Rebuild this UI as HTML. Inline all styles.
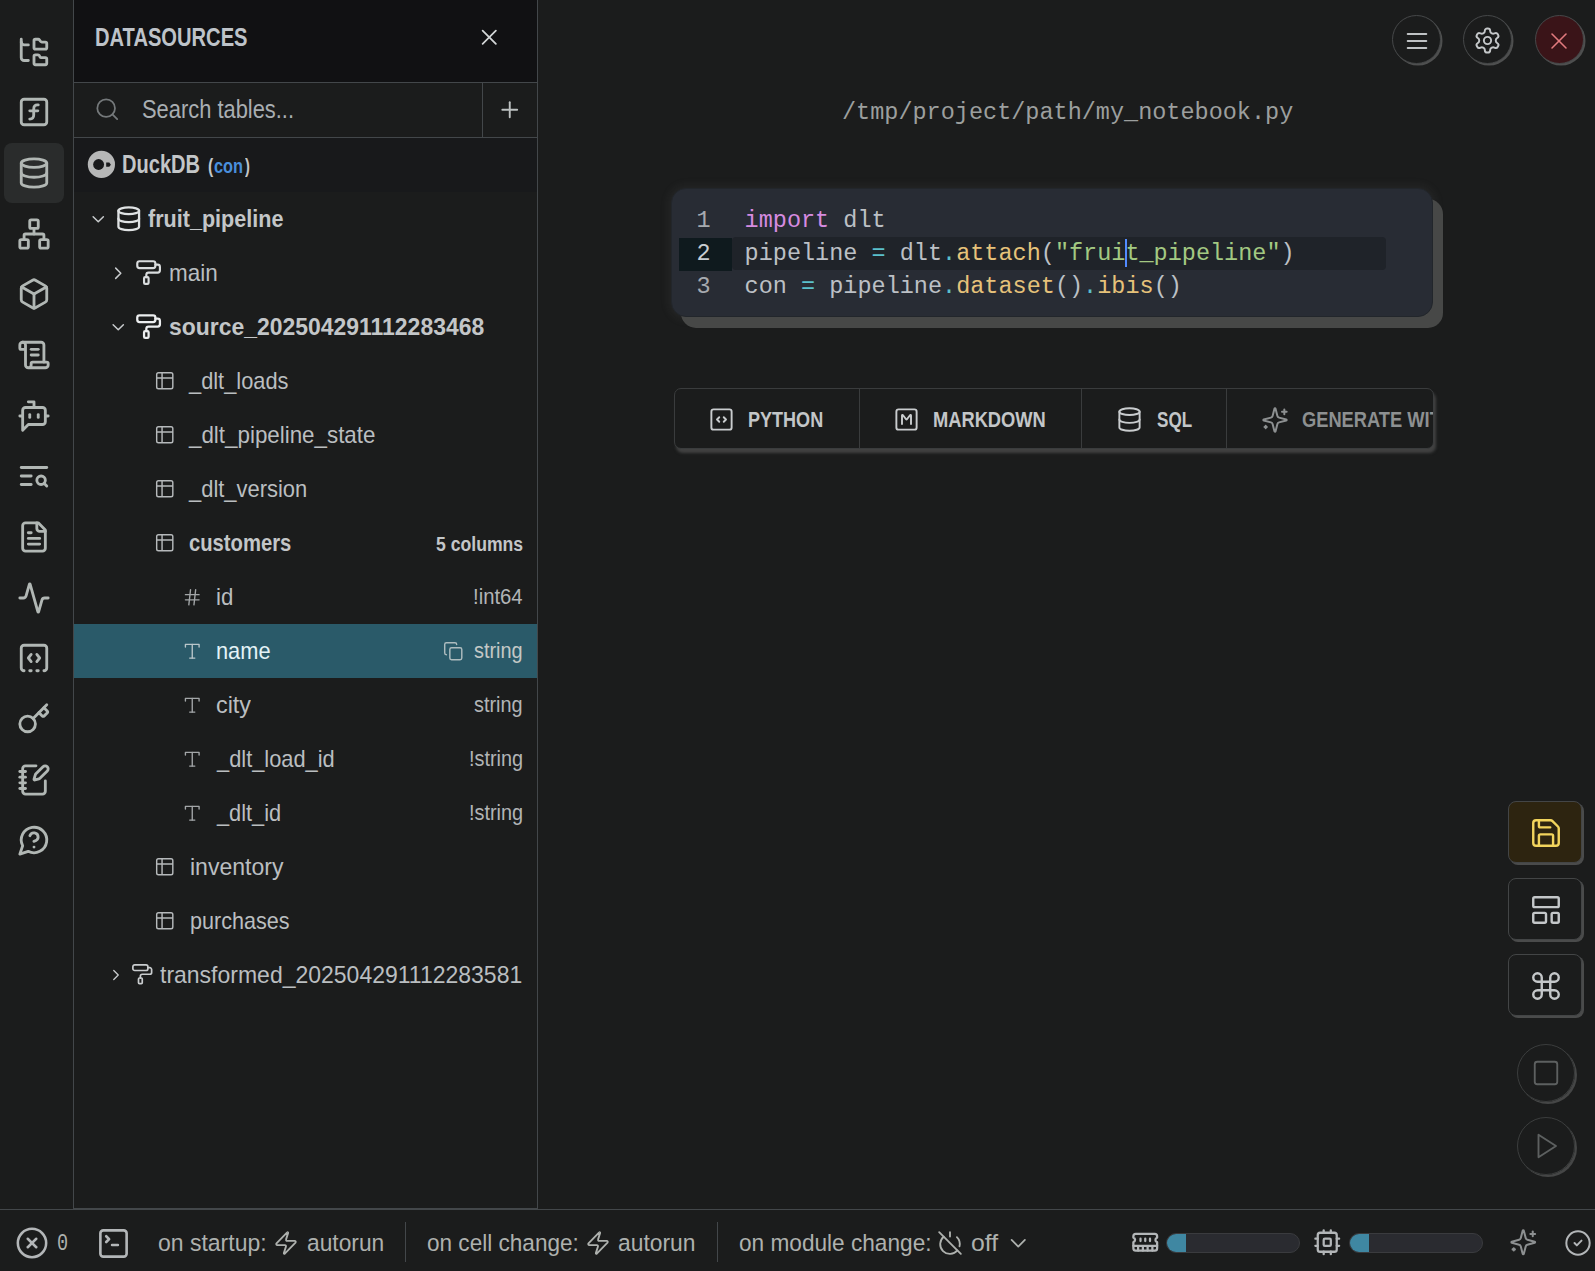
<!DOCTYPE html>
<html><head><meta charset="utf-8"><title>marimo</title>
<style>
html,body{margin:0;padding:0;width:1595px;height:1271px;overflow:hidden;background:#1b1c1c;font-family:"Liberation Sans", sans-serif}
.t{position:absolute;white-space:pre}
.r{position:absolute;box-sizing:border-box}
.ic{position:absolute;overflow:visible}
</style></head><body>
<div class="r" style="left:73px;top:0px;width:1px;height:1209px;background:#43474a"></div>
<div class="r" style="left:4px;top:143px;width:60px;height:60px;background:#2a2c2c;border-radius:8px"></div>
<svg class="ic" style="left:16.9px;top:34.6px;width:34px;height:34px;color:#b1b7b4" viewBox="0 0 24 24" fill="none" stroke="currentColor" stroke-width="2.0" stroke-linecap="round" stroke-linejoin="round"><path d="M20 10a1 1 0 0 0 1-1V6a1 1 0 0 0-1-1h-2.5a1 1 0 0 1-.8-.4l-.9-1.2A1 1 0 0 0 15 3h-2a1 1 0 0 0-1 1v5a1 1 0 0 0 1 1Z"/><path d="M20 21a1 1 0 0 0 1-1v-3a1 1 0 0 0-1-1h-2.9a1 1 0 0 1-.88-.55l-.42-.85a1 1 0 0 0-.92-.6H13a1 1 0 0 0-1 1v5a1 1 0 0 0 1 1Z"/><path d="M3 5a2 2 0 0 0 2 2h3"/><path d="M3 3v13a2 2 0 0 0 2 2h3"/></svg>
<svg class="ic" style="left:16.9px;top:95.25999999999999px;width:34px;height:34px;color:#b1b7b4" viewBox="0 0 24 24" fill="none" stroke="currentColor" stroke-width="2.0" stroke-linecap="round" stroke-linejoin="round"><rect width="18" height="18" x="3" y="3" rx="2" ry="2"/><path d="M9 17c2 0 2.8-1 2.8-2.8V10c0-2 1-3.3 3.2-3"/><path d="M9 11.2h5.7"/></svg>
<svg class="ic" style="left:16.9px;top:155.92px;width:34px;height:34px;color:#b1b7b4" viewBox="0 0 24 24" fill="none" stroke="currentColor" stroke-width="2.0" stroke-linecap="round" stroke-linejoin="round"><ellipse cx="12" cy="5" rx="9" ry="3"/><path d="M3 5V19A9 3 0 0 0 21 19V5"/><path d="M3 12A9 3 0 0 0 21 12"/></svg>
<svg class="ic" style="left:16.9px;top:216.57999999999998px;width:34px;height:34px;color:#b1b7b4" viewBox="0 0 24 24" fill="none" stroke="currentColor" stroke-width="2.0" stroke-linecap="round" stroke-linejoin="round"><rect x="16" y="16" width="6" height="6" rx="1"/><rect x="2" y="16" width="6" height="6" rx="1"/><rect x="9" y="2" width="6" height="6" rx="1"/><path d="M5 16v-3a1 1 0 0 1 1-1h12a1 1 0 0 1 1 1v3"/><path d="M12 12V8"/></svg>
<svg class="ic" style="left:16.9px;top:277.24px;width:34px;height:34px;color:#b1b7b4" viewBox="0 0 24 24" fill="none" stroke="currentColor" stroke-width="2.0" stroke-linecap="round" stroke-linejoin="round"><path d="M21 8a2 2 0 0 0-1-1.73l-7-4a2 2 0 0 0-2 0l-7 4A2 2 0 0 0 3 8v8a2 2 0 0 0 1 1.73l7 4a2 2 0 0 0 2 0l7-4A2 2 0 0 0 21 16Z"/><path d="m3.3 7 8.7 5 8.7-5"/><path d="M12 22V12"/></svg>
<svg class="ic" style="left:16.9px;top:337.9px;width:34px;height:34px;color:#b1b7b4" viewBox="0 0 24 24" fill="none" stroke="currentColor" stroke-width="2.0" stroke-linecap="round" stroke-linejoin="round"><path d="M15 12h-5"/><path d="M15 8h-5"/><path d="M19 17V5a2 2 0 0 0-2-2H4"/><path d="M8 21h12a2 2 0 0 0 2-2v-1a1 1 0 0 0-1-1H11a1 1 0 0 0-1 1v1a2 2 0 1 1-4 0V5a2 2 0 1 0-4 0v2a1 1 0 0 0 1 1h3"/></svg>
<svg class="ic" style="left:16.9px;top:398.56px;width:34px;height:34px;color:#b1b7b4" viewBox="0 0 24 24" fill="none" stroke="currentColor" stroke-width="2.0" stroke-linecap="round" stroke-linejoin="round"><path d="M12 6V2H8"/><path d="m8 18-4 4V8a2 2 0 0 1 2-2h12a2 2 0 0 1 2 2v8a2 2 0 0 1-2 2Z"/><path d="M2 12h2"/><path d="M9 11v2"/><path d="M15 11v2"/><path d="M20 12h2"/></svg>
<svg class="ic" style="left:16.9px;top:459.22px;width:34px;height:34px;color:#b1b7b4" viewBox="0 0 24 24" fill="none" stroke="currentColor" stroke-width="2.0" stroke-linecap="round" stroke-linejoin="round"><path d="M21 6H3"/><path d="M10 12H3"/><path d="M10 18H3"/><circle cx="17" cy="15" r="3"/><path d="m21 19-1.9-1.9"/></svg>
<svg class="ic" style="left:16.9px;top:519.88px;width:34px;height:34px;color:#b1b7b4" viewBox="0 0 24 24" fill="none" stroke="currentColor" stroke-width="2.0" stroke-linecap="round" stroke-linejoin="round"><path d="M15 2H6a2 2 0 0 0-2 2v16a2 2 0 0 0 2 2h12a2 2 0 0 0 2-2V7Z"/><path d="M14 2v4a2 2 0 0 0 2 2h4"/><path d="M10 9H8"/><path d="M16 13H8"/><path d="M16 17H8"/></svg>
<svg class="ic" style="left:16.9px;top:580.54px;width:34px;height:34px;color:#b1b7b4" viewBox="0 0 24 24" fill="none" stroke="currentColor" stroke-width="2.0" stroke-linecap="round" stroke-linejoin="round"><path d="M22 12h-2.48a2 2 0 0 0-1.93 1.46l-2.35 8.36a.25.25 0 0 1-.48 0L9.24 2.18a.25.25 0 0 0-.48 0l-2.35 8.36A2 2 0 0 1 4.49 12H2"/></svg>
<svg class="ic" style="left:16.9px;top:641.1999999999999px;width:34px;height:34px;color:#b1b7b4" viewBox="0 0 24 24" fill="none" stroke="currentColor" stroke-width="2.0" stroke-linecap="round" stroke-linejoin="round"><path d="M10 9.5 8 12l2 2.5"/><path d="M14 21h1"/><path d="m14 9.5 2 2.5-2 2.5"/><path d="M5 21a2 2 0 0 1-2-2V5a2 2 0 0 1 2-2h14a2 2 0 0 1 2 2v14a2 2 0 0 1-2 2"/><path d="M9 21h1"/></svg>
<svg class="ic" style="left:16.9px;top:701.86px;width:34px;height:34px;color:#b1b7b4" viewBox="0 0 24 24" fill="none" stroke="currentColor" stroke-width="2.0" stroke-linecap="round" stroke-linejoin="round"><path d="m15.5 7.5 2.3 2.3a1 1 0 0 0 1.4 0l2.1-2.1a1 1 0 0 0 0-1.4L19 4"/><path d="m21 2-9.6 9.6"/><circle cx="7.5" cy="15.5" r="5.5"/></svg>
<svg class="ic" style="left:16.9px;top:762.52px;width:34px;height:34px;color:#b1b7b4" viewBox="0 0 24 24" fill="none" stroke="currentColor" stroke-width="2.0" stroke-linecap="round" stroke-linejoin="round"><path d="M13.4 2H6a2 2 0 0 0-2 2v16a2 2 0 0 0 2 2h12a2 2 0 0 0 2-2v-7.4"/><path d="M2 6h4"/><path d="M2 10h4"/><path d="M2 14h4"/><path d="M2 18h4"/><path d="M21.378 5.626a1 1 0 1 0-3.004-3.004l-5.01 5.012a2 2 0 0 0-.506.854l-.837 2.87a.5.5 0 0 0 .62.62l2.87-.837a2 2 0 0 0 .854-.506z"/></svg>
<svg class="ic" style="left:16.9px;top:823.18px;width:34px;height:34px;color:#b1b7b4" viewBox="0 0 24 24" fill="none" stroke="currentColor" stroke-width="2.0" stroke-linecap="round" stroke-linejoin="round"><path d="M7.9 20A9 9 0 1 0 4 16.1L2 22Z"/><path d="M9.09 9a3 3 0 0 1 5.83 1c0 2-3 3-3 3"/><path d="M12 17h.01"/></svg>
<div class="r" style="left:74px;top:0px;width:463px;height:82px;background:#111113"></div>
<div class="r" style="left:74px;top:82px;width:463px;height:1px;background:#43474a"></div>
<div class="r" style="left:537px;top:0px;width:1px;height:1209px;background:#43474a"></div>
<div class="r" style="left:74px;top:1208px;width:463px;height:1px;background:#43474a"></div>
<div class="t" style="left:95.00px;top:23.58px;font-size:25px;line-height:27.925px;color:#bec3c9;font-weight:700;font-family:'Liberation Sans', sans-serif;transform:scaleX(0.8054);transform-origin:0 0">DATASOURCES</div>
<svg class="ic" style="left:476.15px;top:24.25px;width:26.5px;height:26.5px;color:#d3d6d7" viewBox="0 0 24 24" fill="none" stroke="currentColor" stroke-width="1.6" stroke-linecap="round" stroke-linejoin="round"><path d="M18 6 6 18"/><path d="m6 6 12 12"/></svg>
<svg class="ic" style="left:94.15px;top:96.05px;width:26.5px;height:26.5px;color:#75797b" viewBox="0 0 24 24" fill="none" stroke="currentColor" stroke-width="1.6" stroke-linecap="round" stroke-linejoin="round"><circle cx="11" cy="11" r="8"/><path d="m21 21-4.3-4.3"/></svg>
<div class="t" style="left:142.10px;top:95.67px;font-size:25px;line-height:27.925px;color:#a9aeb2;font-weight:400;font-family:'Liberation Sans', sans-serif;transform:scaleX(0.8751);transform-origin:0 0">Search tables...</div>
<div class="r" style="left:482px;top:83px;width:1px;height:54px;background:#43474a"></div>
<svg class="ic" style="left:496.75px;top:96.55px;width:25.5px;height:25.5px;color:#bcc0c0" viewBox="0 0 24 24" fill="none" stroke="currentColor" stroke-width="1.8" stroke-linecap="round" stroke-linejoin="round"><path d="M5 12h14"/><path d="M12 5v14"/></svg>
<div class="r" style="left:74px;top:137px;width:463px;height:1px;background:#43474a"></div>
<div class="r" style="left:74px;top:138px;width:463px;height:54px;background:#18191b"></div>
<svg class="ic" style="left:82px;top:145px;width:40px;height:40px" viewBox="0 0 40 40"><circle cx="19.4" cy="19.4" r="13.6" fill="#b6b7b7"/><circle cx="16.6" cy="19.5" r="5.45" fill="#18191b"/><polygon points="24.2,17.6 27.3,17.6 28.9,19.65 27.3,21.7 24.2,21.7" fill="#18191b"/></svg>
<div class="t" style="left:121.80px;top:150.22px;font-size:25.5px;line-height:28.483px;color:#c3c6c8;font-weight:700;font-family:'Liberation Sans', sans-serif;transform:scaleX(0.7863);transform-origin:0 0">DuckDB</div>
<div class="t" style="left:207.80px;top:154.30px;font-size:21px;line-height:23.457px;color:#c3c6c8;font-weight:700;font-family:'Liberation Sans', sans-serif;transform:scaleX(0.7436);transform-origin:0 0">(</div>
<div class="t" style="left:213.80px;top:153.59px;font-size:21px;line-height:23.457px;color:#4a8fdd;font-weight:700;font-family:'Liberation Sans', sans-serif;transform:scaleX(0.7794);transform-origin:0 0">con</div>
<div class="t" style="left:244.50px;top:154.30px;font-size:21px;line-height:23.457px;color:#c3c6c8;font-weight:700;font-family:'Liberation Sans', sans-serif;transform:scaleX(0.7007);transform-origin:0 0">)</div>
<svg class="ic" style="left:87.85px;top:208.75px;width:20.5px;height:20.5px;color:#c9ccce" viewBox="0 0 24 24" fill="none" stroke="currentColor" stroke-width="1.75" stroke-linecap="round" stroke-linejoin="round"><path d="m6 9 6 6 6-6"/></svg>
<svg class="ic" style="left:114.85px;top:204.85px;width:27.5px;height:27.5px;color:#dfe2e3" viewBox="0 0 24 24" fill="none" stroke="currentColor" stroke-width="2.0" stroke-linecap="round" stroke-linejoin="round"><ellipse cx="12" cy="5" rx="9" ry="3"/><path d="M3 5V19A9 3 0 0 0 21 19V5"/><path d="M3 12A9 3 0 0 0 21 12"/></svg>
<div class="t" style="left:148.20px;top:205.68px;font-size:24px;line-height:26.808px;color:#c3c6c8;font-weight:700;font-family:'Liberation Sans', sans-serif;transform:scaleX(0.8986);transform-origin:0 0">fruit_pipeline</div>
<svg class="ic" style="left:107.95px;top:262.95px;width:20.5px;height:20.5px;color:#c9ccce" viewBox="0 0 24 24" fill="none" stroke="currentColor" stroke-width="1.75" stroke-linecap="round" stroke-linejoin="round"><path d="m9 18 6-6-6-6"/></svg>
<svg class="ic" style="left:134.9px;top:258.9px;width:27.2px;height:27.2px;color:#d9dcdd" viewBox="0 0 24 24" fill="none" stroke="currentColor" stroke-width="1.9" stroke-linecap="round" stroke-linejoin="round"><rect width="16" height="6" x="2" y="2" rx="2"/><path d="M10 16v-2a2 2 0 0 1 2-2h8a2 2 0 0 0 2-2V7a2 2 0 0 0-2-2h-2"/><rect width="4" height="6" x="8" y="16" rx="1"/></svg>
<div class="t" style="left:169.40px;top:260.28px;font-size:24px;line-height:26.808px;color:#babec0;font-weight:400;font-family:'Liberation Sans', sans-serif;transform:scaleX(0.9360);transform-origin:0 0">main</div>
<svg class="ic" style="left:107.75px;top:316.75px;width:20.5px;height:20.5px;color:#c9ccce" viewBox="0 0 24 24" fill="none" stroke="currentColor" stroke-width="1.75" stroke-linecap="round" stroke-linejoin="round"><path d="m6 9 6 6 6-6"/></svg>
<svg class="ic" style="left:134.9px;top:312.9px;width:27.2px;height:27.2px;color:#eceeef" viewBox="0 0 24 24" fill="none" stroke="currentColor" stroke-width="2.0" stroke-linecap="round" stroke-linejoin="round"><rect width="16" height="6" x="2" y="2" rx="2"/><path d="M10 16v-2a2 2 0 0 1 2-2h8a2 2 0 0 0 2-2V7a2 2 0 0 0-2-2h-2"/><rect width="4" height="6" x="8" y="16" rx="1"/></svg>
<div class="t" style="left:169.00px;top:313.58px;font-size:24px;line-height:26.808px;color:#c3c6c8;font-weight:700;font-family:'Liberation Sans', sans-serif;transform:scaleX(0.9561);transform-origin:0 0">source_202504291112283468</div>
<svg class="ic" style="left:154.45px;top:369.75px;width:21.5px;height:21.5px;color:#b6b9bb" viewBox="0 0 24 24" fill="none" stroke="currentColor" stroke-width="1.6" stroke-linecap="round" stroke-linejoin="round"><path d="M9 3H5a2 2 0 0 0-2 2v4m6-6h10a2 2 0 0 1 2 2v4M9 3v18m0 0h10a2 2 0 0 0 2-2V9M9 21H5a2 2 0 0 1-2-2V9m0 0h18"/></svg>
<div class="t" style="left:189.25px;top:367.68px;font-size:24px;line-height:26.808px;color:#babec0;font-weight:400;font-family:'Liberation Sans', sans-serif;transform:scaleX(0.9089);transform-origin:0 0">_dlt_loads</div>
<svg class="ic" style="left:154.45px;top:423.75px;width:21.5px;height:21.5px;color:#b6b9bb" viewBox="0 0 24 24" fill="none" stroke="currentColor" stroke-width="1.6" stroke-linecap="round" stroke-linejoin="round"><path d="M9 3H5a2 2 0 0 0-2 2v4m6-6h10a2 2 0 0 1 2 2v4M9 3v18m0 0h10a2 2 0 0 0 2-2V9M9 21H5a2 2 0 0 1-2-2V9m0 0h18"/></svg>
<div class="t" style="left:189.26px;top:421.68px;font-size:24px;line-height:26.808px;color:#babec0;font-weight:400;font-family:'Liberation Sans', sans-serif;transform:scaleX(0.9315);transform-origin:0 0">_dlt_pipeline_state</div>
<svg class="ic" style="left:154.45px;top:477.75px;width:21.5px;height:21.5px;color:#b6b9bb" viewBox="0 0 24 24" fill="none" stroke="currentColor" stroke-width="1.6" stroke-linecap="round" stroke-linejoin="round"><path d="M9 3H5a2 2 0 0 0-2 2v4m6-6h10a2 2 0 0 1 2 2v4M9 3v18m0 0h10a2 2 0 0 0 2-2V9M9 21H5a2 2 0 0 1-2-2V9m0 0h18"/></svg>
<div class="t" style="left:189.25px;top:475.68px;font-size:24px;line-height:26.808px;color:#babec0;font-weight:400;font-family:'Liberation Sans', sans-serif;transform:scaleX(0.9138);transform-origin:0 0">_dlt_version</div>
<svg class="ic" style="left:154.45px;top:531.75px;width:21.5px;height:21.5px;color:#b6b9bb" viewBox="0 0 24 24" fill="none" stroke="currentColor" stroke-width="1.6" stroke-linecap="round" stroke-linejoin="round"><path d="M9 3H5a2 2 0 0 0-2 2v4m6-6h10a2 2 0 0 1 2 2v4M9 3v18m0 0h10a2 2 0 0 0 2-2V9M9 21H5a2 2 0 0 1-2-2V9m0 0h18"/></svg>
<div class="t" style="left:188.90px;top:529.68px;font-size:24px;line-height:26.808px;color:#c3c6c8;font-weight:700;font-family:'Liberation Sans', sans-serif;transform:scaleX(0.8427);transform-origin:0 0">customers</div>
<div class="t" style="left:435.90px;top:532.90px;font-size:20px;line-height:22.340px;color:#c3c6c8;font-weight:700;font-family:'Liberation Sans', sans-serif;transform:scaleX(0.8805);transform-origin:0 0">5 columns</div>
<svg class="ic" style="left:181.95px;top:587.05px;width:20.5px;height:20.5px;color:#a3a6a8" viewBox="0 0 24 24" fill="none" stroke="currentColor" stroke-width="1.6" stroke-linecap="round" stroke-linejoin="round"><line x1="4" x2="20" y1="9" y2="9"/><line x1="4" x2="20" y1="15" y2="15"/><line x1="10" x2="8" y1="3" y2="21"/><line x1="16" x2="14" y1="3" y2="21"/></svg>
<div class="t" style="left:216.30px;top:583.58px;font-size:24px;line-height:26.808px;color:#babec0;font-weight:400;font-family:'Liberation Sans', sans-serif;transform:scaleX(0.9265);transform-origin:0 0">id</div>
<div class="t" style="left:473.20px;top:585.34px;font-size:21.5px;line-height:24.015px;color:#b1b4b6;font-weight:400;font-family:'Liberation Sans', sans-serif;transform:scaleX(0.9432);transform-origin:0 0">!int64</div>
<div class="r" style="left:74px;top:624px;width:463px;height:54px;background:#2a5a69"></div>
<svg class="ic" style="left:181.95px;top:641.05px;width:20.5px;height:20.5px;color:#b9c6ca" viewBox="0 0 24 24" fill="none" stroke="currentColor" stroke-width="1.6" stroke-linecap="round" stroke-linejoin="round"><polyline points="4 7 4 4 20 4 20 7"/><line x1="9" x2="15" y1="20" y2="20"/><line x1="12" x2="12" y1="4" y2="20"/></svg>
<div class="t" style="left:216.30px;top:637.58px;font-size:24px;line-height:26.808px;color:#e3f3f7;font-weight:400;font-family:'Liberation Sans', sans-serif;transform:scaleX(0.9080);transform-origin:0 0">name</div>
<div class="t" style="left:474.20px;top:639.34px;font-size:21.5px;line-height:24.015px;color:#c3c8c6;font-weight:400;font-family:'Liberation Sans', sans-serif;transform:scaleX(0.9245);transform-origin:0 0">string</div>
<svg class="ic" style="left:181.95px;top:695.05px;width:20.5px;height:20.5px;color:#a3a6a8" viewBox="0 0 24 24" fill="none" stroke="currentColor" stroke-width="1.6" stroke-linecap="round" stroke-linejoin="round"><polyline points="4 7 4 4 20 4 20 7"/><line x1="9" x2="15" y1="20" y2="20"/><line x1="12" x2="12" y1="4" y2="20"/></svg>
<div class="t" style="left:216.30px;top:691.58px;font-size:24px;line-height:26.808px;color:#babec0;font-weight:400;font-family:'Liberation Sans', sans-serif;transform:scaleX(0.9722);transform-origin:0 0">city</div>
<div class="t" style="left:474.20px;top:693.34px;font-size:21.5px;line-height:24.015px;color:#b1b4b6;font-weight:400;font-family:'Liberation Sans', sans-serif;transform:scaleX(0.9245);transform-origin:0 0">string</div>
<svg class="ic" style="left:181.95px;top:749.05px;width:20.5px;height:20.5px;color:#a3a6a8" viewBox="0 0 24 24" fill="none" stroke="currentColor" stroke-width="1.6" stroke-linecap="round" stroke-linejoin="round"><polyline points="4 7 4 4 20 4 20 7"/><line x1="9" x2="15" y1="20" y2="20"/><line x1="12" x2="12" y1="4" y2="20"/></svg>
<div class="t" style="left:216.65px;top:745.58px;font-size:24px;line-height:26.808px;color:#babec0;font-weight:400;font-family:'Liberation Sans', sans-serif;transform:scaleX(0.9096);transform-origin:0 0">_dlt_load_id</div>
<div class="t" style="left:468.70px;top:747.34px;font-size:21.5px;line-height:24.015px;color:#b1b4b6;font-weight:400;font-family:'Liberation Sans', sans-serif;transform:scaleX(0.9241);transform-origin:0 0">!string</div>
<svg class="ic" style="left:181.95px;top:803.05px;width:20.5px;height:20.5px;color:#a3a6a8" viewBox="0 0 24 24" fill="none" stroke="currentColor" stroke-width="1.6" stroke-linecap="round" stroke-linejoin="round"><polyline points="4 7 4 4 20 4 20 7"/><line x1="9" x2="15" y1="20" y2="20"/><line x1="12" x2="12" y1="4" y2="20"/></svg>
<div class="t" style="left:216.65px;top:799.58px;font-size:24px;line-height:26.808px;color:#babec0;font-weight:400;font-family:'Liberation Sans', sans-serif;transform:scaleX(0.9070);transform-origin:0 0">_dlt_id</div>
<div class="t" style="left:468.70px;top:801.34px;font-size:21.5px;line-height:24.015px;color:#b1b4b6;font-weight:400;font-family:'Liberation Sans', sans-serif;transform:scaleX(0.9241);transform-origin:0 0">!string</div>
<svg class="ic" style="left:442.75px;top:641.05px;width:20.5px;height:20.5px;color:#adbcbf" viewBox="0 0 24 24" fill="none" stroke="currentColor" stroke-width="1.7" stroke-linecap="round" stroke-linejoin="round"><rect width="14" height="14" x="8" y="8" rx="2" ry="2"/><path d="M4 16c-1.1 0-2-.9-2-2V4c0-1.1.9-2 2-2h10c1.1 0 2 .9 2 2"/></svg>
<svg class="ic" style="left:154.45px;top:855.75px;width:21.5px;height:21.5px;color:#b6b9bb" viewBox="0 0 24 24" fill="none" stroke="currentColor" stroke-width="1.6" stroke-linecap="round" stroke-linejoin="round"><path d="M9 3H5a2 2 0 0 0-2 2v4m6-6h10a2 2 0 0 1 2 2v4M9 3v18m0 0h10a2 2 0 0 0 2-2V9M9 21H5a2 2 0 0 1-2-2V9m0 0h18"/></svg>
<div class="t" style="left:189.60px;top:853.68px;font-size:24px;line-height:26.808px;color:#babec0;font-weight:400;font-family:'Liberation Sans', sans-serif;transform:scaleX(0.9600);transform-origin:0 0">inventory</div>
<svg class="ic" style="left:154.45px;top:909.75px;width:21.5px;height:21.5px;color:#b6b9bb" viewBox="0 0 24 24" fill="none" stroke="currentColor" stroke-width="1.6" stroke-linecap="round" stroke-linejoin="round"><path d="M9 3H5a2 2 0 0 0-2 2v4m6-6h10a2 2 0 0 1 2 2v4M9 3v18m0 0h10a2 2 0 0 0 2-2V9M9 21H5a2 2 0 0 1-2-2V9m0 0h18"/></svg>
<div class="t" style="left:189.60px;top:907.68px;font-size:24px;line-height:26.808px;color:#babec0;font-weight:400;font-family:'Liberation Sans', sans-serif;transform:scaleX(0.8985);transform-origin:0 0">purchases</div>
<svg class="ic" style="left:107.1px;top:966.4px;width:18px;height:18px;color:#c9ccce" viewBox="0 0 24 24" fill="none" stroke="currentColor" stroke-width="1.75" stroke-linecap="round" stroke-linejoin="round"><path d="m9 18 6-6-6-6"/></svg>
<svg class="ic" style="left:130.75px;top:962.85px;width:22.5px;height:22.5px;color:#c9ccce" viewBox="0 0 24 24" fill="none" stroke="currentColor" stroke-width="1.8" stroke-linecap="round" stroke-linejoin="round"><rect width="16" height="6" x="2" y="2" rx="2"/><path d="M10 16v-2a2 2 0 0 1 2-2h8a2 2 0 0 0 2-2V7a2 2 0 0 0-2-2h-2"/><rect width="4" height="6" x="8" y="16" rx="1"/></svg>
<div class="t" style="left:160.20px;top:962.28px;font-size:24px;line-height:26.808px;color:#babec0;font-weight:400;font-family:'Liberation Sans', sans-serif;transform:scaleX(0.9580);transform-origin:0 0">transformed_202504291112283581</div>
<div class="t" style="left:842.00px;top:100.02px;font-size:23.5px;line-height:26.625px;color:#9c9f9e;font-weight:400;font-family:'Liberation Mono', monospace">/tmp/project/path/my_notebook.py</div>
<div class="r" style="left:671px;top:188px;width:762px;height:129px;background:#282c34;border-radius:15px;border:1px solid #22262b;box-shadow:10px 11px 0 0 #474847, 0 0 9px 3px rgba(120,120,120,.10)"></div>
<div class="r" style="left:679px;top:238px;width:53px;height:33px;background:#0f1a1e"></div>
<div class="r" style="left:732px;top:237px;width:654px;height:33px;background:#1f2329;border-radius:4px"></div>
<div class="t" style="left:696.5px;top:207.72px;font-size:23.5px;line-height:26.63px;font-family:'Liberation Mono', monospace;color:#a6aaaf">1</div>
<div class="t" style="left:696.5px;top:240.72px;font-size:23.5px;line-height:26.63px;font-family:'Liberation Mono', monospace;color:#c9cdd1">2</div>
<div class="t" style="left:696.5px;top:273.72px;font-size:23.5px;line-height:26.63px;font-family:'Liberation Mono', monospace;color:#a6aaaf">3</div>
<div class="t" style="left:744.6px;top:207.82px;font-size:23.5px;line-height:26.63px;font-family:'Liberation Mono', monospace;color:#bcc0c5"><span style="color:#d68be0">import</span> dlt</div>
<div class="t" style="left:744.6px;top:240.82px;font-size:23.5px;line-height:26.63px;font-family:'Liberation Mono', monospace;color:#bcc0c5">pipeline <span style="color:#5bc0cc">=</span> dlt<span style="color:#5bc0cc">.</span><span style="color:#e6c27a">attach</span>(<span style="color:#a3c982">"fruit_pipeline"</span>)</div>
<div class="t" style="left:744.6px;top:273.82px;font-size:23.5px;line-height:26.63px;font-family:'Liberation Mono', monospace;color:#bcc0c5">con <span style="color:#5bc0cc">=</span> pipeline<span style="color:#5bc0cc">.</span><span style="color:#e6c27a">dataset</span>()<span style="color:#5bc0cc">.</span><span style="color:#e6c27a">ibis</span>()</div>
<div class="r" style="left:1125px;top:239px;width:2px;height:28px;background:#528bff"></div>
<div class="r" style="left:674px;top:388px;width:760px;height:61px;border:1px solid #3a3c3d;border-radius:7px;background:#1b1c1c;box-shadow:2px 4px 3px 0 rgba(70,70,70,.9)"></div>
<div class="r" style="left:858.5px;top:389px;width:1px;height:59px;background:#3a3c3d"></div>
<div class="r" style="left:1081.3px;top:389px;width:1px;height:59px;background:#3a3c3d"></div>
<div class="r" style="left:1226.3px;top:389px;width:1px;height:59px;background:#3a3c3d"></div>
<svg class="ic" style="left:707.9px;top:406.2px;width:27px;height:27px;color:#c9ccce" viewBox="0 0 24 24" fill="none" stroke="currentColor" stroke-width="1.7" stroke-linecap="round" stroke-linejoin="round"><path d="m10 10-2 2 2 2"/><path d="m14 14 2-2-2-2"/><rect x="3" y="3" width="18" height="18" rx="2"/></svg>
<div class="t" style="left:748.30px;top:408.01px;font-size:21.2px;line-height:23.680px;color:#c3c6c8;font-weight:700;font-family:'Liberation Sans', sans-serif;transform:scaleX(0.8513);transform-origin:0 0">PYTHON</div>
<svg class="ic" style="left:892.9px;top:406.2px;width:27px;height:27px;color:#c9ccce" viewBox="0 0 24 24" fill="none" stroke="currentColor" stroke-width="1.7" stroke-linecap="round" stroke-linejoin="round"><rect width="18" height="18" x="3" y="3" rx="2"/><path d="M8 16V8.5a.5.5 0 0 1 .9-.3l2.7 3.599a.5.5 0 0 0 .8 0l2.7-3.6a.5.5 0 0 1 .9.3V16"/></svg>
<div class="t" style="left:933.40px;top:408.01px;font-size:21.2px;line-height:23.680px;color:#c3c6c8;font-weight:700;font-family:'Liberation Sans', sans-serif;transform:scaleX(0.8629);transform-origin:0 0">MARKDOWN</div>
<svg class="ic" style="left:1116.1px;top:406.2px;width:27px;height:27px;color:#c9ccce" viewBox="0 0 24 24" fill="none" stroke="currentColor" stroke-width="1.7" stroke-linecap="round" stroke-linejoin="round"><ellipse cx="12" cy="5" rx="9" ry="3"/><path d="M3 5V19A9 3 0 0 0 21 19V5"/><path d="M3 12A9 3 0 0 0 21 12"/></svg>
<div class="t" style="left:1156.60px;top:408.01px;font-size:21.2px;line-height:23.680px;color:#c3c6c8;font-weight:700;font-family:'Liberation Sans', sans-serif;transform:scaleX(0.8053);transform-origin:0 0">SQL</div>
<svg class="ic" style="left:1260.5px;top:405.7px;width:28px;height:28px;color:#8d9091" viewBox="0 0 24 24" fill="none" stroke="currentColor" stroke-width="1.7" stroke-linecap="round" stroke-linejoin="round"><path d="M9.937 15.5A2 2 0 0 0 8.5 14.063l-6.135-1.582a.5.5 0 0 1 0-.962L8.5 9.936A2 2 0 0 0 9.937 8.5l1.582-6.135a.5.5 0 0 1 .963 0L14.063 8.5A2 2 0 0 0 15.5 9.937l6.135 1.581a.5.5 0 0 1 0 .964L15.5 14.063a2 2 0 0 0-1.437 1.437l-1.582 6.135a.5.5 0 0 1-.963 0z"/><path d="M20 3v4"/><path d="M22 5h-4"/><path d="M4 17v2"/><path d="M5 18H3"/></svg>
<div class="r" style="left:1240px;top:395px;width:193px;height:50px;overflow:hidden">
<div class="t" style="left:62.00px;top:13.01px;font-size:21.2px;line-height:23.680px;color:#8d9091;font-weight:700;font-family:'Liberation Sans', sans-serif;transform:scaleX(0.8629);transform-origin:0 0">GENERATE WITH AI</div>
</div>
<div class="r" style="left:1392.0px;top:15.3px;width:49px;height:49px;border-radius:50%;border:1px solid #464849;background:#1b1c1c;box-shadow:1.5px 1.5px 0 0 #4e4f4f"></div>
<svg class="ic" style="left:1402.5px;top:26.5px;width:28px;height:28px;color:#bfc2c4" viewBox="0 0 24 24" fill="none" stroke="currentColor" stroke-width="1.6" stroke-linecap="round" stroke-linejoin="round"><line x1="4" x2="20" y1="12" y2="12"/><line x1="4" x2="20" y1="6" y2="6"/><line x1="4" x2="20" y1="18" y2="18"/></svg>
<div class="r" style="left:1463.0px;top:15.3px;width:49px;height:49px;border-radius:50%;border:1px solid #464849;background:#1b1c1c;box-shadow:1.5px 1.5px 0 0 #4e4f4f"></div>
<svg class="ic" style="left:1473.0px;top:26.0px;width:29px;height:29px;color:#c4c7c9" viewBox="0 0 24 24" fill="none" stroke="currentColor" stroke-width="1.6" stroke-linecap="round" stroke-linejoin="round"><path d="M12.22 2h-.44a2 2 0 0 0-2 2v.18a2 2 0 0 1-1 1.73l-.43.25a2 2 0 0 1-2 0l-.15-.08a2 2 0 0 0-2.73.73l-.22.38a2 2 0 0 0 .73 2.73l.15.1a2 2 0 0 1 1 1.72v.51a2 2 0 0 1-1 1.74l-.15.09a2 2 0 0 0-.73 2.730l.22.38a2 2 0 0 0 2.73.73l.15-.08a2 2 0 0 1 2 0l.43.25a2 2 0 0 1 1 1.73V20a2 2 0 0 0 2 2h.44a2 2 0 0 0 2-2v-.18a2 2 0 0 1 1-1.73l.43-.25a2 2 0 0 1 2 0l.15.08a2 2 0 0 0 2.73-.73l.22-.39a2 2 0 0 0-.73-2.73l-.15-.08a2 2 0 0 1-1-1.74v-.5a2 2 0 0 1 1-1.74l.15-.09a2 2 0 0 0 .73-2.73l-.22-.38a2 2 0 0 0-2.73-.73l-.15.08a2 2 0 0 1-2 0l-.43-.25a2 2 0 0 1-1-1.73V4a2 2 0 0 0-2-2z"/><circle cx="12" cy="12" r="3"/></svg>
<div class="r" style="left:1534.5px;top:15.3px;width:49px;height:49px;border-radius:50%;border:1px solid #464849;background:#3a1418;box-shadow:1.5px 1.5px 0 0 #4e4f4f"></div>
<svg class="ic" style="left:1545.0px;top:26.5px;width:28px;height:28px;color:#e27a7e" viewBox="0 0 24 24" fill="none" stroke="currentColor" stroke-width="1.3" stroke-linecap="round" stroke-linejoin="round"><path d="M18 6 6 18"/><path d="m6 6 12 12"/></svg>
<div class="r" style="left:1508px;top:801px;width:74px;height:62px;border-radius:8px;border:1px solid #434546;background:#2d2410;box-shadow:2px 2px 0 0 #4a4b4b"></div>
<svg class="ic" style="left:1528.7px;top:816.0px;width:34px;height:34px;color:#f2d45c" viewBox="0 0 24 24" fill="none" stroke="currentColor" stroke-width="1.7" stroke-linecap="round" stroke-linejoin="round"><path d="M15.2 3a2 2 0 0 1 1.4.6l3.8 3.8a2 2 0 0 1 .6 1.4V19a2 2 0 0 1-2 2H5a2 2 0 0 1-2-2V5a2 2 0 0 1 2-2z"/><path d="M17 21v-7a1 1 0 0 0-1-1H8a1 1 0 0 0-1 1v7"/><path d="M7 3v4a1 1 0 0 0 1 1h7"/></svg>
<div class="r" style="left:1508px;top:877.5px;width:74px;height:62px;border-radius:8px;border:1px solid #434546;background:#1b1c1c;box-shadow:2px 2px 0 0 #4a4b4b"></div>
<svg class="ic" style="left:1528.7px;top:892.5px;width:34px;height:34px;color:#c4c7c9" viewBox="0 0 24 24" fill="none" stroke="currentColor" stroke-width="1.7" stroke-linecap="round" stroke-linejoin="round"><rect width="18" height="7" x="3" y="3" rx="1"/><rect width="9" height="7" x="3" y="14" rx="1"/><rect width="5" height="7" x="16" y="14" rx="1"/></svg>
<div class="r" style="left:1508px;top:954px;width:74px;height:62px;border-radius:8px;border:1px solid #434546;background:#1b1c1c;box-shadow:2px 2px 0 0 #4a4b4b"></div>
<svg class="ic" style="left:1528.7px;top:969.0px;width:34px;height:34px;color:#c4c7c9" viewBox="0 0 24 24" fill="none" stroke="currentColor" stroke-width="1.7" stroke-linecap="round" stroke-linejoin="round"><path d="M15 6v12a3 3 0 1 0 3-3H6a3 3 0 1 0 3 3V6a3 3 0 1 0-3 3h12a3 3 0 1 0-3-3"/></svg>
<div class="r" style="left:1517px;top:1043.5px;width:58px;height:58px;border-radius:50%;border:1px solid #3b3d3d;box-shadow:2px 2px 0 0 #454646"></div>
<svg class="ic" style="left:1531.0px;top:1057.5px;width:30px;height:30px;color:#5d6060" viewBox="0 0 24 24" fill="none" stroke="currentColor" stroke-width="1.5" stroke-linecap="round" stroke-linejoin="round"><rect width="18" height="18" x="3" y="3" rx="2"/></svg>
<div class="r" style="left:1517px;top:1116.5px;width:58px;height:58px;border-radius:50%;border:1px solid #3b3d3d;box-shadow:2px 2px 0 0 #454646"></div>
<svg class="ic" style="left:1531.0px;top:1130.5px;width:30px;height:30px;color:#5d6060" viewBox="0 0 24 24" fill="none" stroke="currentColor" stroke-width="1.5" stroke-linecap="round" stroke-linejoin="round"><polygon points="6 3 20 12 6 21 6 3"/></svg>
<div class="r" style="left:0px;top:1209px;width:1595px;height:1px;background:#43474a"></div>
<svg class="ic" style="left:14.899999999999999px;top:1225.5px;width:34px;height:34px;color:#b3b6b8" viewBox="0 0 24 24" fill="none" stroke="currentColor" stroke-width="1.8" stroke-linecap="round" stroke-linejoin="round"><circle cx="12" cy="12" r="10"/><path d="m15 9-6 6"/><path d="m9 9 6 6"/></svg>
<div class="t" style="left:57.40px;top:1230.39px;font-size:24.5px;line-height:27.759px;color:#aeb1ae;font-weight:400;font-family:'Liberation Mono', monospace;transform:scaleX(0.7551);transform-origin:0 0">0</div>
<svg class="ic" style="left:96.3px;top:1225.5px;width:35px;height:35px;color:#b3b6b8" viewBox="0 0 24 24" fill="none" stroke="currentColor" stroke-width="1.8" stroke-linecap="round" stroke-linejoin="round"><path d="m7 11 2-2-2-2"/><path d="M11 13h4"/><rect width="18" height="18" x="3" y="3" rx="2" ry="2"/></svg>
<div class="t" style="left:158.20px;top:1228.83px;font-size:24.5px;line-height:27.366px;color:#aeb1ae;font-weight:400;font-family:'Liberation Sans', sans-serif;transform:scaleX(0.9381);transform-origin:0 0">on startup:</div>
<svg class="ic" style="left:273.0px;top:1229.9px;width:26px;height:26px;color:#aeb1ae" viewBox="0 0 24 24" fill="none" stroke="currentColor" stroke-width="1.7" stroke-linecap="round" stroke-linejoin="round"><path d="M4 14a1 1 0 0 1-.78-1.63l9.9-10.2a.5.5 0 0 1 .86.46l-1.92 6.02A1 1 0 0 0 13 10h7a1 1 0 0 1 .78 1.63l-9.9 10.2a.5.5 0 0 1-.86-.46l1.92-6.02A1 1 0 0 0 11 14z"/></svg>
<div class="t" style="left:306.70px;top:1228.83px;font-size:24.5px;line-height:27.366px;color:#aeb1ae;font-weight:400;font-family:'Liberation Sans', sans-serif;transform:scaleX(0.9290);transform-origin:0 0">autorun</div>
<div class="r" style="left:405px;top:1222px;width:1px;height:40px;background:#43474a"></div>
<div class="t" style="left:427.10px;top:1228.83px;font-size:24.5px;line-height:27.366px;color:#aeb1ae;font-weight:400;font-family:'Liberation Sans', sans-serif;transform:scaleX(0.9211);transform-origin:0 0">on cell change:</div>
<svg class="ic" style="left:585.0px;top:1229.9px;width:26px;height:26px;color:#aeb1ae" viewBox="0 0 24 24" fill="none" stroke="currentColor" stroke-width="1.7" stroke-linecap="round" stroke-linejoin="round"><path d="M4 14a1 1 0 0 1-.78-1.63l9.9-10.2a.5.5 0 0 1 .86.46l-1.92 6.02A1 1 0 0 0 13 10h7a1 1 0 0 1 .78 1.63l-9.9 10.2a.5.5 0 0 1-.86-.46l1.92-6.02A1 1 0 0 0 11 14z"/></svg>
<div class="t" style="left:618.40px;top:1228.83px;font-size:24.5px;line-height:27.366px;color:#aeb1ae;font-weight:400;font-family:'Liberation Sans', sans-serif;transform:scaleX(0.9326);transform-origin:0 0">autorun</div>
<div class="r" style="left:717px;top:1222px;width:1px;height:40px;background:#43474a"></div>
<div class="t" style="left:738.70px;top:1228.83px;font-size:24.5px;line-height:27.366px;color:#aeb1ae;font-weight:400;font-family:'Liberation Sans', sans-serif;transform:scaleX(0.9237);transform-origin:0 0">on module change:</div>
<svg class="ic" style="left:937.2px;top:1230.3px;width:26px;height:26px;color:#aeb1ae" viewBox="0 0 24 24" fill="none" stroke="currentColor" stroke-width="1.7" stroke-linecap="round" stroke-linejoin="round"><path d="M18.36 6.64A9 9 0 0 1 20.77 15"/><path d="M6.16 6.16a9 9 0 1 0 12.68 12.68"/><path d="M12 2v4"/><path d="m2 2 20 20"/></svg>
<div class="t" style="left:971.00px;top:1228.83px;font-size:24.5px;line-height:27.366px;color:#aeb1ae;font-weight:400;font-family:'Liberation Sans', sans-serif;transform:scaleX(1.0130);transform-origin:0 0">off</div>
<svg class="ic" style="left:1004.65px;top:1230.05px;width:26.5px;height:26.5px;color:#aeb1ae" viewBox="0 0 24 24" fill="none" stroke="currentColor" stroke-width="1.6" stroke-linecap="round" stroke-linejoin="round"><path d="m6 9 6 6 6-6"/></svg>
<svg class="ic" style="left:1131.05px;top:1228.25px;width:28.5px;height:28.5px;color:#b3b6b8" viewBox="0 0 24 24" fill="none" stroke="currentColor" stroke-width="1.9" stroke-linecap="round" stroke-linejoin="round"><path d="M6 19v-3"/><path d="M10 19v-3"/><path d="M14 19v-3"/><path d="M18 19v-3"/><path d="M8 11V9"/><path d="M16 11V9"/><path d="M12 11V9"/><path d="M2 15h20"/><path d="M2 7a2 2 0 0 1 2-2h16a2 2 0 0 1 2 2v1.1a2 2 0 0 0 0 3.837V17a2 2 0 0 1-2 2H4a2 2 0 0 1-2-2v-5.1a2 2 0 0 0 0-3.837Z"/></svg>
<div class="r" style="left:1166.2px;top:1233px;width:134px;height:20px;border-radius:10px;background:#2a2b30;border:1px solid #3a3b3e;overflow:hidden"><div style="position:absolute;left:0;top:0;width:19px;height:100%;background:#3f87a2"></div></div>
<div class="r" style="left:1348.7px;top:1233px;width:134px;height:20px;border-radius:10px;background:#2a2b30;border:1px solid #3a3b3e;overflow:hidden"><div style="position:absolute;left:0;top:0;width:19px;height:100%;background:#3f87a2"></div></div>
<svg class="ic" style="left:1313.45px;top:1228.25px;width:28.5px;height:28.5px;color:#b3b6b8" viewBox="0 0 24 24" fill="none" stroke="currentColor" stroke-width="1.9" stroke-linecap="round" stroke-linejoin="round"><rect width="16" height="16" x="4" y="4" rx="2"/><rect width="6" height="6" x="9" y="9" rx="1"/><path d="M15 2v2"/><path d="M15 20v2"/><path d="M2 15h2"/><path d="M2 9h2"/><path d="M20 15h2"/><path d="M20 9h2"/><path d="M9 2v2"/><path d="M9 20v2"/></svg>
<svg class="ic" style="left:1509.25px;top:1227.75px;width:28.5px;height:28.5px;color:#8d9091" viewBox="0 0 24 24" fill="none" stroke="currentColor" stroke-width="1.7" stroke-linecap="round" stroke-linejoin="round"><path d="M9.937 15.5A2 2 0 0 0 8.5 14.063l-6.135-1.582a.5.5 0 0 1 0-.962L8.5 9.936A2 2 0 0 0 9.937 8.5l1.582-6.135a.5.5 0 0 1 .963 0L14.063 8.5A2 2 0 0 0 15.5 9.937l6.135 1.581a.5.5 0 0 1 0 .964L15.5 14.063a2 2 0 0 0-1.437 1.437l-1.582 6.135a.5.5 0 0 1-.963 0z"/><path d="M20 3v4"/><path d="M22 5h-4"/><path d="M4 17v2"/><path d="M5 18H3"/></svg>
<svg class="ic" style="left:1563.6px;top:1228.5px;width:28px;height:28px;color:#b3b6b8" viewBox="0 0 24 24" fill="none" stroke="currentColor" stroke-width="1.7" stroke-linecap="round" stroke-linejoin="round"><circle cx="12" cy="12" r="10"/><path d="m9 12 2 2 4-4"/></svg>
</body></html>
